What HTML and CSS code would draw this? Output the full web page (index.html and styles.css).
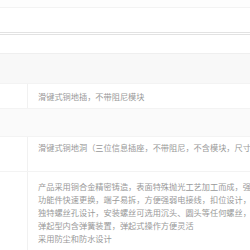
FILE: index.html
```
<!DOCTYPE html>
<html>
    <head>
        <meta charset="utf-8">
        <title>产品参数</title>
        <link rel="stylesheet" href="styles.css">
    </head>
    <body>
        <div class="page">
            <div class="strip"></div>
            <div class="head"></div>
            <div class="sub"></div>
            <table class="spec">
                <tbody>
                    <tr class="group"><td colspan="2"></td></tr>
                    <tr class="row-a">
                        <th></th>
                        <td>滑键式铜地插，不带阻尼模块</td>
                    </tr>
                    <tr class="group group-b"><td colspan="2"></td></tr>
                    <tr class="row-b">
                        <th></th>
                        <td>滑键式铜地洞（三位信息插座，不带阻尼，不含模块，尺寸：120×120mm）</td>
                    </tr>
                    <tr class="row-c">
                        <th></th>
                        <td>
                            <div>产品采用铜合金精密铸造，表面特殊抛光工艺加工而成，强度高、耐磨损</div>
                            <div>功能件快速更换，端子易拆，方便强弱电接线，扣位设计，安装牢固</div>
                            <div>独特螺丝孔设计，安装螺丝可选用沉头、圆头等任何螺丝，适用性强</div>
                            <div>弹起型内含弹簧装置，弹起式操作方便灵活</div>
                            <div>采用防尘和防水设计</div>
                        </td>
                    </tr>
                </tbody>
            </table>
        </div>
    </body>
</html>
```

FILE: styles.css
```
html, body {
    margin: 0;
    background: #fff;
    overflow: hidden;
}
.page {
    width: 640px;
    font-family: "Noto Sans CJK SC", "Noto Sans", sans-serif;
    font-size: 8.2px;
    color: #999;
}
.strip {
    height: 7px;
    background: #fdfdfd;
    border-bottom: 1px solid #f3f3f3;
}
.head {
    height: 24px;
    border-bottom: 3px double #e2e2e2;
}
.sub {
    height: 18px;
    border-bottom: 1px solid #efefef;
}
table.spec {
    width: 100%;
    border-collapse: collapse;
}
.spec td, .spec th {
    padding: 0;
    text-align: left;
    vertical-align: top;
    white-space: nowrap;
    border-bottom: 1px solid #f3f3f3;
}
.spec th {
    width: 27px;
    border-right: 1px solid #f1f1f1;
}
.spec td {
    padding-left: 10px;
    line-height: 13px;
}
.spec tr.group td {
    height: 29px;
    background: #f8f8f8;
    border-bottom: 1px solid #f3f3f3;
}
.spec tr.group-b td {
    height: 27px;
    background: #fafafa;
}
.spec tr.row-a td {
    height: 18px;
    padding-top: 6px;
}
.spec tr.row-b td {
    height: 30px;
    padding-top: 4px;
}
.spec tr.row-c td {
    padding-top: 8px;
    padding-bottom: 6px;
}
```
